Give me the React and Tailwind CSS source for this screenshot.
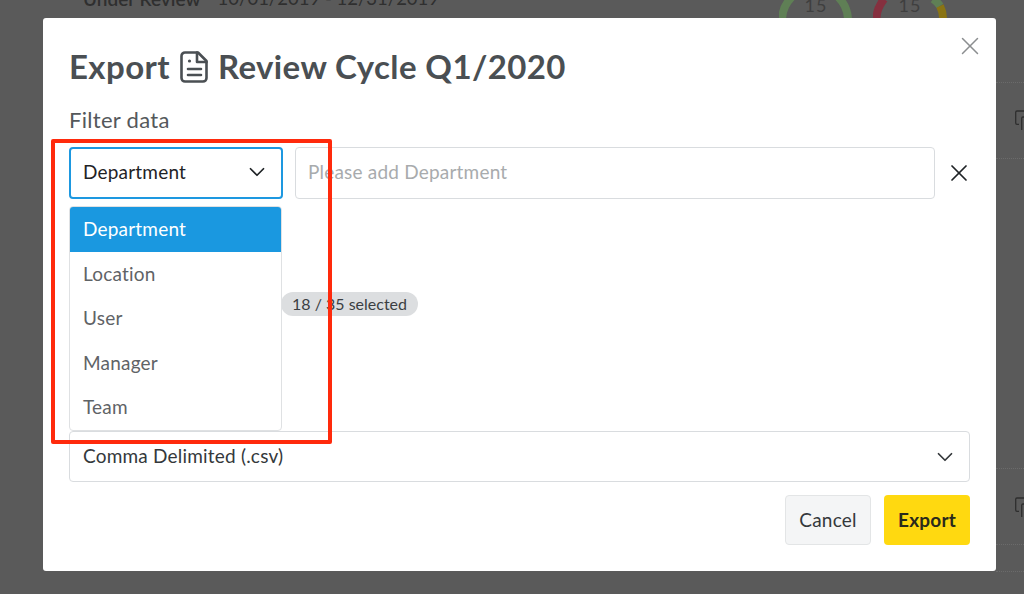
import React from 'react';
import { ChevronDown, X } from 'lucide-react';

const font = { fontFamily: 'Lato' };

const options = ['Department', 'Location', 'User', 'Manager', 'Team'];

const CopyIcon = () => (
    <svg className="ml-[19px]" width="9" height="20" viewBox="0 0 9 20" fill="none" stroke="#2e2e2e" strokeWidth="1.3">
        <path d="M9 1H2a1.3 1.3 0 0 0-1.3 1.3V13a1.3 1.3 0 0 0 1.3 1.3H4" />
        <path d="M9 7H8a1.3 1.3 0 0 0-1.3 1.3V20" />
    </svg>
);

const Donut = ({ children }) => (
    <div className="relative h-[18px] w-[74px]">
        <svg className="absolute top-0 left-0" width="74" height="18" viewBox="0 0 74 18" fill="none" strokeWidth="8">
            {children}
        </svg>
        <div className="flex h-[18px] flex-col items-center overflow-hidden text-[#3f3f3f]">
            <span className="mt-[-5px] text-[18px] leading-[20px] tracking-[1px]">15</span>
            <span className="text-[15px] leading-[16px] font-semibold">Total</span>
        </div>
    </div>
);

function Background() {
    return (
        <div className="h-[594px] w-[1024px] overflow-hidden bg-[#5a5a5a]">
            <div className="flex h-[18px]">
                <div className="mt-[-13px] ml-[83px] flex h-[23px] w-[355px] gap-[17px] text-[19px] leading-[23px] whitespace-nowrap text-[#2f2f2f]">
                    <span className="font-semibold">Under Review</span>
                    <span className="text-[18.5px]">10/01/2019 - 12/31/2019</span>
                </div>
                <div className="ml-[341px] flex gap-[20px]">
                    <Donut>
                        <circle cx="36" cy="20.6" r="33" stroke="#5f7f55" />
                    </Donut>
                    <Donut>
                        <path d="M3.5 18C3.5 11 6.5 5 11 -1" stroke="#85303f" />
                        <path d="M60 -1C63 1 65 3 67 6" stroke="#5f7f55" />
                        <path d="M67 6C69 10 70 14 70 18" stroke="#8a7414" />
                    </Donut>
                </div>
            </div>
        </div>
    );
}

export default function App() {
    return (
        <div className="relative h-[594px] w-[1024px] overflow-hidden" style={font}>
            <Background />

            <div className="absolute top-0 right-0 flex h-full w-[28px] flex-col">
                <div className="mt-[82px] border-t border-dotted border-[#6b6b6b]" />
                <div className="mt-[27px]"><CopyIcon /></div>
                <div className="mt-[28px] border-t border-dotted border-[#6b6b6b]" />
                <div className="mt-[309px] border-t border-dotted border-[#6b6b6b]" />
                <div className="mt-[28px]"><CopyIcon /></div>
                <div className="mt-[27px] border-t border-dotted border-[#6b6b6b]" />
                <div className="mt-[26px] border-t border-dotted border-[#6b6b6b]" />
            </div>

            <div className="absolute top-[18px] left-[43px] flex h-[553px] w-[953px] flex-col rounded-[3px] bg-white pt-[26px] pr-[26px] pl-[26px]">
                <X className="absolute top-[13px] right-[11px] text-[#8b8e90]" size={30} strokeWidth={1.5} absoluteStrokeWidth />

                <h1 className="flex h-[46px] items-center text-[33px] font-bold tracking-[0.4px] text-[#4a4f53]">
                    Export
                    <svg className="mr-[10px] ml-[10px]" width="28" height="32" viewBox="0 0 28 32" fill="none" stroke="#4a4f53" strokeWidth="2.6" strokeLinejoin="round" strokeLinecap="round">
                        <path d="M5 1.5h13l8.5 8.5v17a3.5 3.5 0 0 1-3.5 3.5H5A3.5 3.5 0 0 1 1.5 27V5A3.5 3.5 0 0 1 5 1.5z" />
                        <path d="M17 1.5v9.5h9.5" />
                        <path d="M8 24h13M8 18h13" />
                        <circle cx="9.5" cy="10" r="1.6" fill="#4a4f53" stroke="none" />
                    </svg>
                    Review Cycle Q1/2020
                </h1>

                <div className="mt-[17px] text-[22px] leading-[26px] tracking-[0.3px] text-[#54585b]">Filter data</div>

                <div className="relative mt-[14px] flex h-[52px] items-center tracking-[0.2px]">
                    <div className="flex h-full w-[214px] shrink-0 items-center justify-between rounded-[4px] border-2 border-[#1d98e0] pr-[11px] pb-[2px] pl-[12px] text-[19px] text-[#1f2326]">
                        Department
                        <ChevronDown size={26} strokeWidth={1.75} absoluteStrokeWidth />
                    </div>
                    <div className="ml-[12px] flex h-full w-[640px] shrink-0 items-center rounded-[4px] border border-[#d9dcdf] pb-[2px] pl-[12px] text-[19px] text-[#a8abad]">
                        Please add Department
                    </div>
                    <X className="ml-[10px] shrink-0 text-[#1f2326]" size={28} strokeWidth={1.75} absoluteStrokeWidth />

                    <ul className="absolute top-[59px] left-0 z-10 w-[213px] overflow-hidden rounded-[4px] border border-[#dfe1e3] bg-white text-[19px] text-[#5f6366]">
                        {options.map((option, i) => (
                            <li key={option} className={`flex h-[44.5px] items-center pl-[13px] ${i === 0 ? 'bg-[#1a98e0] text-white' : ''}`}>
                                {option}
                            </li>
                        ))}
                    </ul>
                </div>

                <div className="mt-[93px] ml-[212px] flex h-[24px] w-[137px] items-center justify-center rounded-full bg-[#dcdee0] text-[16px] text-[#3b3f42]">
                    18 / 35 selected
                </div>

                <div className="mt-[115px] flex h-[51px] items-center justify-between rounded-[4px] border border-[#d9dcdf] pr-[11px] pl-[13px] text-[19px] tracking-[0.2px] text-[#34383b]">
                    Comma Delimited (.csv)
                    <ChevronDown size={26} strokeWidth={1.75} absoluteStrokeWidth />
                </div>

                <div className="mt-[13px] flex justify-end gap-[13px] text-[19px] tracking-[0.2px]">
                    <button className="h-[50px] w-[86px] rounded-[4px] border border-[#e3e5e6] bg-[#f4f5f6] text-[#34383b]">Cancel</button>
                    <button className="h-[50px] w-[86px] rounded-[4px] bg-[#ffd910] font-bold text-[#2a2a1c]">Export</button>
                </div>
            </div>

            {/* red annotation box from the screenshot */}
            <div className="absolute top-[139px] left-[51px] z-20 h-[305px] w-[281px] rounded-[2px] border-4 border-[#ff2a0c]" />
        </div>
    );
}
